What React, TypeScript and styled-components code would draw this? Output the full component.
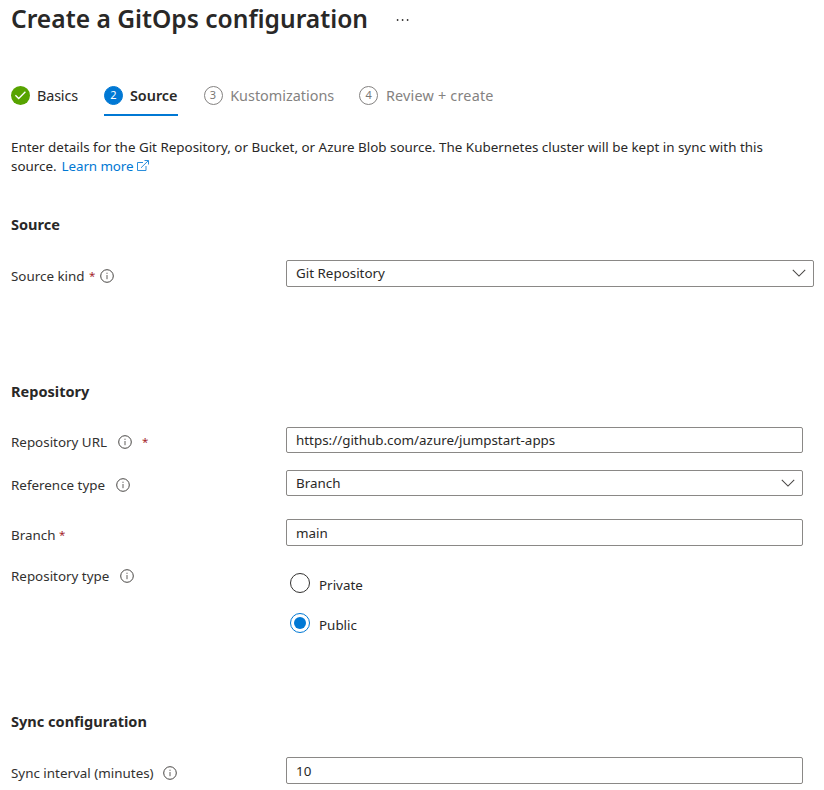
import React from "react";
import styled, { createGlobalStyle } from "styled-components";

const GlobalStyle = createGlobalStyle`
  * { box-sizing: border-box; }
  body { margin: 0; background: #fff; }
`;

const Page = styled.main`
  display: flex;
  flex-direction: column;
  width: 824px;
  height: 790px;
  overflow: hidden;
  padding-left: 11px;
  color: #292827;
  font-family: "Noto Sans", "Segoe UI", sans-serif;
  font-size: 13.4px;
  line-height: 20px;
  white-space: nowrap;
`;

const Header = styled.header`
  display: flex;
  height: 76px;
`;

const Title = styled.h1`
  margin: 0;
  width: 385px;
  font-size: 24.6px;
  line-height: 38px;
  font-weight: 600;
`;

const MoreButton = styled.button`
  display: flex;
  height: 40px;
  padding: 0;
  border: 0;
  background: none;
  align-items: center;
`;

const Tabs = styled.nav`
  display: flex;
  height: 40px;
`;

const Tab = styled.div<{ $active?: boolean; $disabled?: boolean; $gap: number; $tracking?: number }>`
  display: flex;
  align-items: center;
  height: 40px;
  margin-right: ${(p) => p.$gap}px;
  border-bottom: 2px solid ${(p) => (p.$active ? "#0078d4" : "transparent")};
  color: ${(p) => (p.$disabled ? "#848281" : "#292827")};
  font-size: 14.4px;
  font-weight: ${(p) => (p.$active ? 600 : 400)};
  letter-spacing: ${(p) => p.$tracking ?? 0}px;
`;

const TabMark = styled.span<{ $width: number }>`
  display: flex;
  flex: none;
  width: ${(p) => p.$width}px;
`;

const TabText = styled.span`
  padding-top: 2px;
`;

const StepNumber = styled.span<{ $filled?: boolean }>`
  display: flex;
  align-items: center;
  justify-content: center;
  width: 19px;
  height: 19px;
  border: 1px solid ${(p) => (p.$filled ? "#0078d4" : "#848281")};
  border-radius: 50%;
  background: ${(p) => (p.$filled ? "#0078d4" : "#fff")};
  color: ${(p) => (p.$filled ? "#fff" : "#797775")};
  font-size: 11px;
  line-height: 16px;
  padding-bottom: 1px;
  font-weight: 400;
  letter-spacing: 0;
`;

const Intro = styled.p`
  margin: 22px 0 0;
  width: 780px;
  height: 38px;
  line-height: 19px;
`;

const Link = styled.a`
  display: inline-flex;
  align-items: center;
  gap: 4px;
  margin-left: 1.5px;
  color: #0078d4;
  letter-spacing: -0.1px;
  text-decoration: none;

  svg {
    margin-top: -2px;
  }
`;

const Section = styled.section<{ $top: number }>`
  display: flex;
  flex-direction: column;
  margin-top: ${(p) => p.$top}px;
`;

const Heading = styled.h2`
  margin: 0;
  height: 20px;
  font-size: 14.55px;
  line-height: 20px;
  font-weight: 700;
`;

const Row = styled.div<{ $top: number; $wide?: boolean }>`
  display: grid;
  grid-template-columns: 275px ${(p) => (p.$wide ? 528 : 517)}px;
  margin-top: ${(p) => p.$top}px;
`;

const Label = styled.label<{ $top: number; $gap?: number }>`
  display: flex;
  align-items: center;
  align-self: start;
  gap: ${(p) => p.$gap ?? 10.5}px;
  height: 20px;
  margin-top: ${(p) => p.$top}px;
  color: #323130;
`;

const Required = styled.span`
  width: 6px;
  color: #a4262c;
  font-size: 11.5px;
  line-height: 20px;
`;

const Field = styled.div<{ $height: number; $raised?: boolean }>`
  display: flex;
  align-items: center;
  justify-content: space-between;
  height: ${(p) => p.$height}px;
  padding: 0 7px ${(p) => (p.$raised ? 1 : 0)}px 9px;
  border: 1px solid #8a8886;
  border-radius: 2px;
`;

const RadioGroup = styled.div`
  display: flex;
  flex-direction: column;
  gap: 20px;
  padding: 7px 0 0 4px;
`;

const RadioOption = styled.div`
  display: flex;
  gap: 9px;
  height: 20px;
  line-height: 24px;
`;

const Radio = styled.span<{ $checked?: boolean }>`
  display: flex;
  align-items: center;
  justify-content: center;
  width: 20px;
  height: 20px;
  border: 1px solid ${(p) => (p.$checked ? "#0078d4" : "#323130")};
  border-radius: 50%;

  &::after {
    content: "";
    width: 12px;
    height: 12px;
    border-radius: 50%;
    background: ${(p) => (p.$checked ? "#0078d4" : "transparent")};
  }
`;

const Info = () => (
  <svg width="14" height="14" viewBox="0 0 14 14" fill="none">
    <circle cx="7" cy="7" r="6.3" stroke="#484644" />
    <path d="M7 6v4.2M7 3.7v1.2" stroke="#605e5c" />
  </svg>
);

const Chevron = () => (
  <svg width="14" height="8" viewBox="0 0 14 8" fill="none">
    <path d="M.8.8 7 7 13.2.8" stroke="#484644" strokeWidth="1.05" />
  </svg>
);

const Check = () => (
  <svg width="19" height="19" viewBox="0 0 19 19" fill="none">
    <circle cx="9.5" cy="9.5" r="9.5" fill="#57a300" />
    <path d="m4.4 9.2 3.3 3.3 6.7-6.7" stroke="#fff" strokeWidth="1.3" />
  </svg>
);

const External = () => (
  <svg width="12" height="12" viewBox="0 0 12 12" fill="none" stroke="#2b8edb" strokeWidth="1">
    <path d="M6 2.5H.5v8h8.500V6M4 7.800 11.300.700M7.500.5h4V4.500" />
  </svg>
);

const Ellipsis = () => (
  <svg width="14" height="4" viewBox="0 0 14 4" fill="#323130">
    <circle cx="1.6" cy="2" r=".9" />
    <circle cx="6.6" cy="2" r=".9" />
    <circle cx="11.6" cy="2" r=".9" />
  </svg>
);

export default function App() {
  return (
    <>
      <GlobalStyle />
      <Page>
        <Header>
          <Title>Create a GitOps configuration</Title>
          <MoreButton aria-label="More"><Ellipsis /></MoreButton>
        </Header>
        <Tabs>
          <Tab $gap={26} $tracking={-0.15}><TabMark $width={26}><Check /></TabMark><TabText>Basics</TabText></Tab>
          <Tab $active $gap={26}><TabMark $width={26}><StepNumber $filled>2</StepNumber></TabMark><TabText>Source</TabText></Tab>
          <Tab $disabled $gap={25}><TabMark $width={26.7}><StepNumber>3</StepNumber></TabMark><TabText>Kustomizations</TabText></Tab>
          <Tab $disabled $gap={0} $tracking={0.2}><TabMark $width={26.7}><StepNumber>4</StepNumber></TabMark><TabText>Review + create</TabText></Tab>
        </Tabs>
        <Intro>
          Enter details for the Git Repository, or Bucket, or Azure Blob source. The Kubernetes cluster will be kept in sync with this<br />
          source. <Link>Learn more <External /></Link>
        </Intro>

        <Section $top={38}>
          <Heading>Source</Heading>
          <Row $top={26} $wide>
            <Label $top={6} $gap={4.5}>Source kind <Required>*</Required><Info /></Label>
            <Field $height={27} $raised>Git Repository<Chevron /></Field>
          </Row>
        </Section>

        <Section $top={94}>
          <Heading>Repository</Heading>
          <Row $top={26}>
            <Label $top={5}>Repository URL <Info /><Required>*</Required></Label>
            <Field $height={26}>https://github.com/azure/jumpstart-apps</Field>
          </Row>
          <Row $top={17}>
            <Label $top={5}>Reference type <Info /></Label>
            <Field $height={26}>Branch<Chevron /></Field>
          </Row>
          <Row $top={23}>
            <Label $top={6} $gap={3.5}>Branch <Required>*</Required></Label>
            <Field $height={27}>main</Field>
          </Row>
          <Row $top={20}>
            <Label $top={0}>Repository type <Info /></Label>
            <RadioGroup role="radiogroup">
              <RadioOption role="radio"><Radio />Private</RadioOption>
              <RadioOption role="radio"><Radio $checked />Public</RadioOption>
            </RadioGroup>
          </Row>
        </Section>

        <Section $top={78}>
          <Heading>Sync configuration</Heading>
          <Row $top={26}>
            <Label $top={6} $gap={9.5}>Sync interval (minutes) <Info /></Label>
            <Field $height={27}>10</Field>
          </Row>
        </Section>
      </Page>
    </>
  );
}
